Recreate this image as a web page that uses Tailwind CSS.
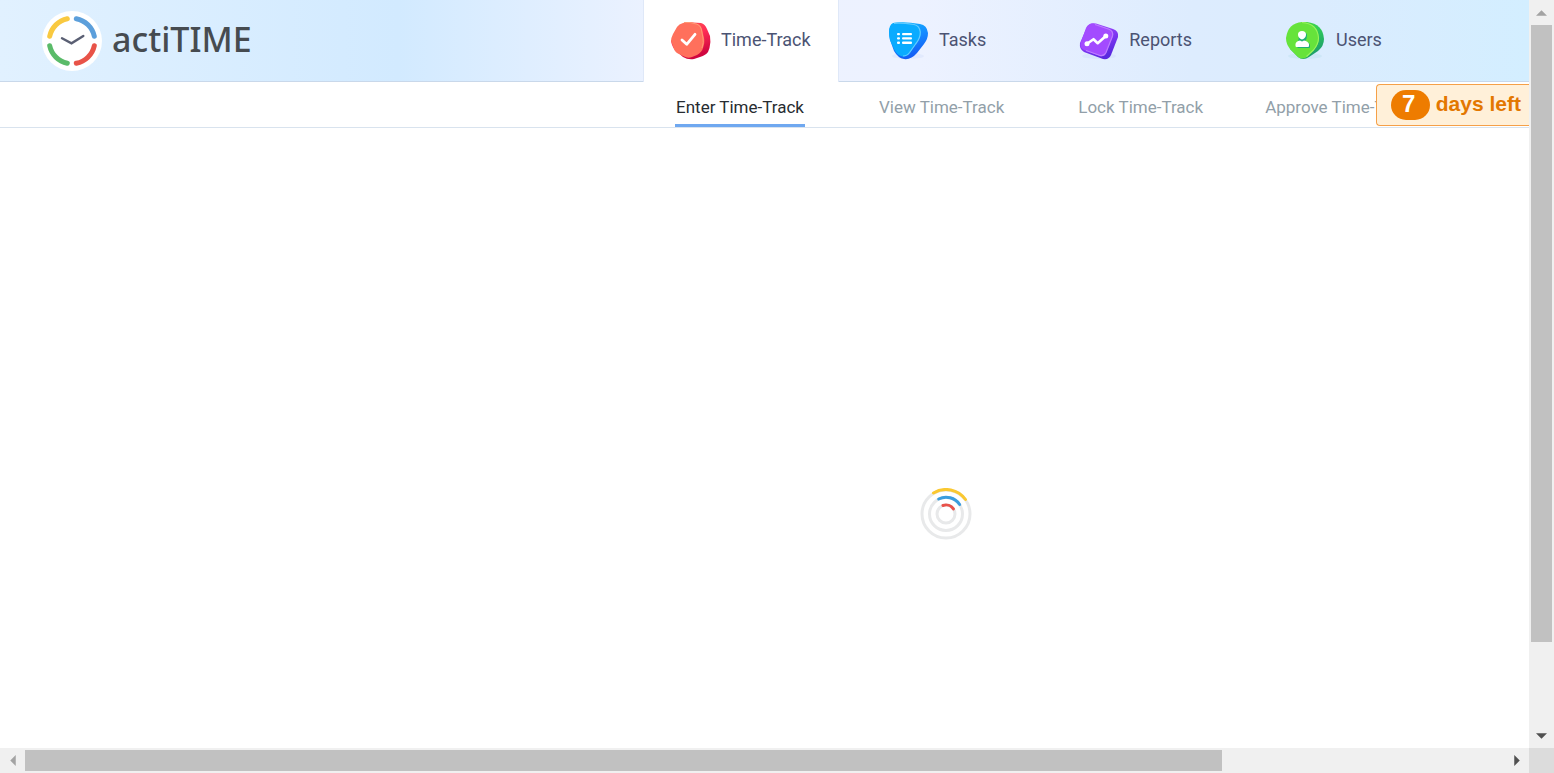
<!DOCTYPE html>
<html lang="en">
<head>
<meta charset="utf-8">
<title>actiTIME - Enter Time-Track</title>
<script src="https://cdn.jsdelivr.net/npm/@tailwindcss/browser@4"></script>
</head>
<body class="bg-white font-['Roboto',sans-serif]">
<div class="grid h-screen grid-cols-[minmax(0,1fr)_25px] grid-rows-[minmax(0,1fr)_25px] overflow-hidden">
  <div class="relative flex min-h-0 flex-col overflow-hidden bg-white">
    <header class="flex h-[82px] shrink-0 whitespace-nowrap bg-[linear-gradient(90deg,#e1f1ff_0%,#d2eaff_26%,#ecf2ff_43%,#edf2ff_60%,#ddecfe_78%,#dbecfe_86%,#d3eeff_100%)]">
      <div class="flex w-[643px] shrink-0 items-center border-b border-[#c9d8ea] pl-[42px]">
        <a href="#" class="flex items-center gap-[10px] text-[#464b50]">
          <svg width="60" height="60" viewBox="0 0 60 60" fill="none" stroke-linecap="round" aria-hidden="true">
            <circle cx="30" cy="30" r="30" fill="#fff"/>
            <g stroke-width="5">
              <path d="M7.700 25.300A22.800 22.800 0 0 1 25.300 7.700" stroke="#f9c940"/>
              <path d="M34.300 7.700A22.800 22.800 0 0 1 52.300 25.300" stroke="#5c9fdb"/>
              <path d="M52.300 34.700A22.800 22.800 0 0 1 34.300 52.300" stroke="#e85348"/>
              <path d="M25.300 52.300A22.800 22.800 0 0 1 7.700 34.700" stroke="#5abb69"/>
            </g>
            <path d="M20 27.300L29.500 32.300L41.300 25" stroke="#5a5f73" stroke-width="2.400"/>
          </svg>
          <span class="pb-[3px] font-['Noto_Sans',sans-serif] text-[34px] leading-[56px] font-medium">actiTIME</span>
        </a>
      </div>
      <nav class="flex flex-1 text-[18px] text-[#4b5373]">
        <a href="#" aria-current="page" class="flex h-[82px] w-[196px] shrink-0 items-center gap-[10px] border-x border-[#dfe8f8] bg-white pl-[27px]">
          <svg width="40" height="40" viewBox="0 0 40 40" aria-hidden="true">
            <defs><linearGradient id="red" x1="0" y1="0" x2="0.4" y2="1"><stop stop-color="#ff5a4e"/><stop offset=".5" stop-color="#ff2e56"/><stop offset="1" stop-color="#d0063f"/></linearGradient></defs>
            <path d="M14 1L30 2Q34 3 36 8L39 15Q40 20 38.500 27L37 31Q35 34 29 36L23 38Q17 39 12 36L5 30Q1 26 0 20Z" fill="url(#red)"/>
            <path d="M12 2Q15 1 19 1L27 3Q30 4 31 8L33 17Q34 21 32 27Q31 31 26 34L21 36Q17 38 12 35L6 32Q3 30 2 25L0 20Q0 17 2 13L6 6Q8 3 12 2Z" fill="#ff705c"/>
            <path d="M13 1.600L19 1.500L26 3.200Q29 4 30.300 8L32 17Q33 21 31 27" fill="none" stroke="#ff9a74" stroke-width="1"/>
            <path d="M11 19L15.700 23.300L24 13.300" fill="none" stroke="#fff" stroke-width="2.800" stroke-linecap="round" stroke-linejoin="round"/>
          </svg>
          <span class="pb-[3px]">Time-Track</span>
        </a>
        <div class="flex flex-1 items-center gap-[93px] border-b border-[#c9d8ea] pl-[49px]">
          <a href="#" class="flex shrink-0 items-center gap-[11px]">
            <svg width="40" height="40" viewBox="0 0 40 40" aria-hidden="true">
              <defs><linearGradient id="blue" x1="0" y1="0" x2="0.3" y2="1"><stop stop-color="#10b9ff"/><stop offset=".55" stop-color="#1687ff"/><stop offset="1" stop-color="#145ff5"/></linearGradient></defs>
              <ellipse cx="20" cy="35" rx="16" ry="3" fill="#b7cff7" opacity=".2"/>
              <path d="M5 2Q16 0 32 3Q39 4 40 12Q40 18 36 23L29 32Q23 39 16 38Q10 37 6 30L2 19Q-1 5 5 2Z" fill="url(#blue)"/>
              <path d="M6 2Q13 1 26 3Q32 4 33 11Q33 17 28 23L22 32Q18 37 13 35Q9 34 6 28L2 19Q-1 5 6 2Z" fill="#09abff"/>
              <path d="M6 2.300Q13 1.500 26 3.500Q31.500 4.500 32.300 11Q32.500 17 27.600 23L21.600 31.500Q19 35 15 35" fill="none" stroke="#62ccff" stroke-width="1.200"/>
              <g fill="#fff"><rect x="9" y="12" width="3" height="2.300" rx="1"/><rect x="14" y="12" width="10" height="2.300" rx="1"/><rect x="9" y="16.300" width="3" height="2.300" rx="1"/><rect x="14" y="16.300" width="10" height="2.300" rx="1"/><rect x="9" y="20.600" width="3" height="2.300" rx="1"/><rect x="14" y="20.600" width="10" height="2.300" rx="1"/></g>
            </svg>
            <span class="pb-[3px]">Tasks</span>
          </a>
          <a href="#" class="flex shrink-0 items-center gap-[10px]">
            <svg width="40" height="40" viewBox="0 0 40 40" aria-hidden="true">
              <defs><linearGradient id="purple" x1="0" y1="0" x2="0.5" y2="1"><stop stop-color="#a450ff"/><stop offset=".5" stop-color="#8a3bf7"/><stop offset="1" stop-color="#5a29df"/></linearGradient></defs>
              <ellipse cx="20" cy="35" rx="17" ry="3" fill="#b7c8f5" opacity=".2"/>
              <path d="M8 6Q11 1 17 2.500L34 8Q40 10 39 16L32 34Q30 39 24 38L5 31Q0 28 1 22Z" fill="url(#purple)"/>
              <path d="M7 7Q10 1 16 3L30 8Q35 10 34 15L27 32Q25 36 21 35L5 29Q0 26 2 21Z" fill="#a34bff"/>
              <path d="M16 3.500L30 8.300Q34.500 10 33.500 15L27 31.500Q25 35.500 21 34.500L7 29.500" fill="none" stroke="#bd7cff" stroke-width="1.200"/>
              <path d="M8 22.800L14.500 18.200L18.700 22.200L26.800 15" fill="none" stroke="#fff" stroke-width="2.600" stroke-linejoin="round"/>
              <circle cx="8" cy="22.800" r="2.500" fill="#fff"/><circle cx="26.800" cy="15" r="2.500" fill="#fff"/>
            </svg>
            <span class="pb-[3px]">Reports</span>
          </a>
          <a href="#" class="flex shrink-0 items-center gap-[11px]">
            <svg width="40" height="40" viewBox="0 0 40 40" aria-hidden="true">
              <defs><linearGradient id="green" x1="0" y1="0" x2="0.5" y2="1"><stop stop-color="#57dd39"/><stop offset=".5" stop-color="#2fcb58"/><stop offset="1" stop-color="#1d9d6c"/></linearGradient></defs>
              <ellipse cx="20" cy="35" rx="17" ry="3" fill="#a9d6e5" opacity=".25"/>
              <path d="M17 1H22Q38 3 39 18Q39 25 33 30L24 36Q18 40 13 36L5 28Z" fill="url(#green)"/>
              <path d="M17 1Q33 2 34 17Q34 23 29 29L22 36Q17 39 13 36L5 28Q1 23 1 17Q3 2 17 1Z" fill="#66e33b"/>
              <path d="M17 1.500Q32.500 2.500 33.500 17Q33.500 23 28.500 29L21.500 35.500" fill="none" stroke="#9af35e" stroke-width="1.100"/>
              <path d="M14 14.500Q14 11 18 11T22 14.500Q22 18 20 20Q24 21 25 24V26Q25 27 24 27H12.500Z" fill="#1fae77"/>
              <g fill="#fff"><path d="M13 13.500Q13 10 17 10T21 13.500Q21 17 17 18.500Q13 17 13 13.500Z"/><path d="M10.500 25V23Q11 20 15 19.500L17 20.500L19 19.500Q23 20 24 23V25Q24 26 23 26H11.500Q10.500 26 10.500 25Z"/></g>
            </svg>
            <span class="pb-[3px]">Users</span>
          </a>
        </div>
      </nav>
    </header>

    <nav class="flex h-[46px] shrink-0 items-stretch overflow-hidden border-b border-[#d9e3ee] pl-[675px] text-[17px] leading-[50px] whitespace-nowrap text-[#929fa9]">
      <a href="#" aria-current="page" class="w-[130px] shrink-0 border-b-3 border-[#6fa8f0] text-center text-[#272c31]">Enter Time-Track</a>
      <a href="#" class="ml-[74px] shrink-0">View Time-Track</a>
      <a href="#" class="ml-[74px] shrink-0">Lock Time-Track</a>
      <a href="#" class="ml-[62px] shrink-0">Approve Time-Track</a>
    </nav>

    <a href="#" class="absolute top-[84px] right-0 flex h-[42px] items-center gap-[6px] rounded-l-[4px] border border-r-0 border-[#f5a048] bg-[#fff0d9] pr-2 pl-[14px] font-['Liberation_Sans',sans-serif] font-bold whitespace-nowrap text-[#e37700]">
      <span class="flex h-[30px] w-[39px] justify-center rounded-full bg-[#ee7c00] pr-[3px] text-[24px] leading-7 text-white">7</span>
      <span class="pb-[2px] text-[21px] leading-9">days left</span>
    </a>

    <main class="min-h-0 flex-1 overflow-hidden">
      <div class="flex h-[771px] w-[1891px] items-center justify-center" role="status" aria-label="Loading">
        <svg width="52" height="52" viewBox="0 0 52 52" fill="none" stroke-width="3" aria-hidden="true">
          <g stroke="#e8e9ea"><circle cx="26" cy="26" r="24"/><circle cx="26" cy="26" r="16.500"/><circle cx="26" cy="26" r="9"/></g>
          <g stroke-linecap="round"><path d="M13.500 5A24 24 0 0 1 45.500 11.500" stroke="#fac831"/><path d="M18.700 11A16.500 16.500 0 0 1 39.700 16.500" stroke="#3b9ddd"/><path d="M23 17.500A9 9 0 0 1 33.400 20.900" stroke="#e8524a"/></g>
        </svg>
      </div>
    </main>
  </div>

  <div class="flex flex-col items-center bg-[#f0f0f0]">
    <button type="button" aria-label="Scroll up" class="flex h-[25px] w-full shrink-0 items-center justify-center"><svg width="11" height="6" viewBox="0 0 12 6"><path d="M6 0L12 6H0Z" fill="#a3a3a3"/></svg></button>
    <div class="flex w-full flex-1 flex-col items-center"><div class="h-[88.4%] w-[21px] bg-[#c1c1c1]"></div></div>
    <button type="button" aria-label="Scroll down" class="flex h-[25px] w-full shrink-0 items-center justify-center"><svg width="11" height="6" viewBox="0 0 12 6"><path d="M0 0H12L6 6Z" fill="#505050"/></svg></button>
  </div>

  <div class="flex items-center bg-[#f0f0f0]">
    <button type="button" aria-label="Scroll left" class="flex h-full w-[25px] shrink-0 items-center justify-center"><svg width="6" height="11" viewBox="0 0 6 12"><path d="M6 0V12L0 6Z" fill="#a3a3a3"/></svg></button>
    <div class="flex h-full flex-1 items-center"><div class="h-[21px] w-[80.9%] bg-[#c1c1c1]"></div></div>
    <button type="button" aria-label="Scroll right" class="flex h-full w-[25px] shrink-0 items-center justify-center"><svg width="6" height="11" viewBox="0 0 6 12"><path d="M0 0L6 6L0 12Z" fill="#505050"/></svg></button>
  </div>
  <div class="bg-[#dcdcdc]"></div>
</div>
</body>
</html>
